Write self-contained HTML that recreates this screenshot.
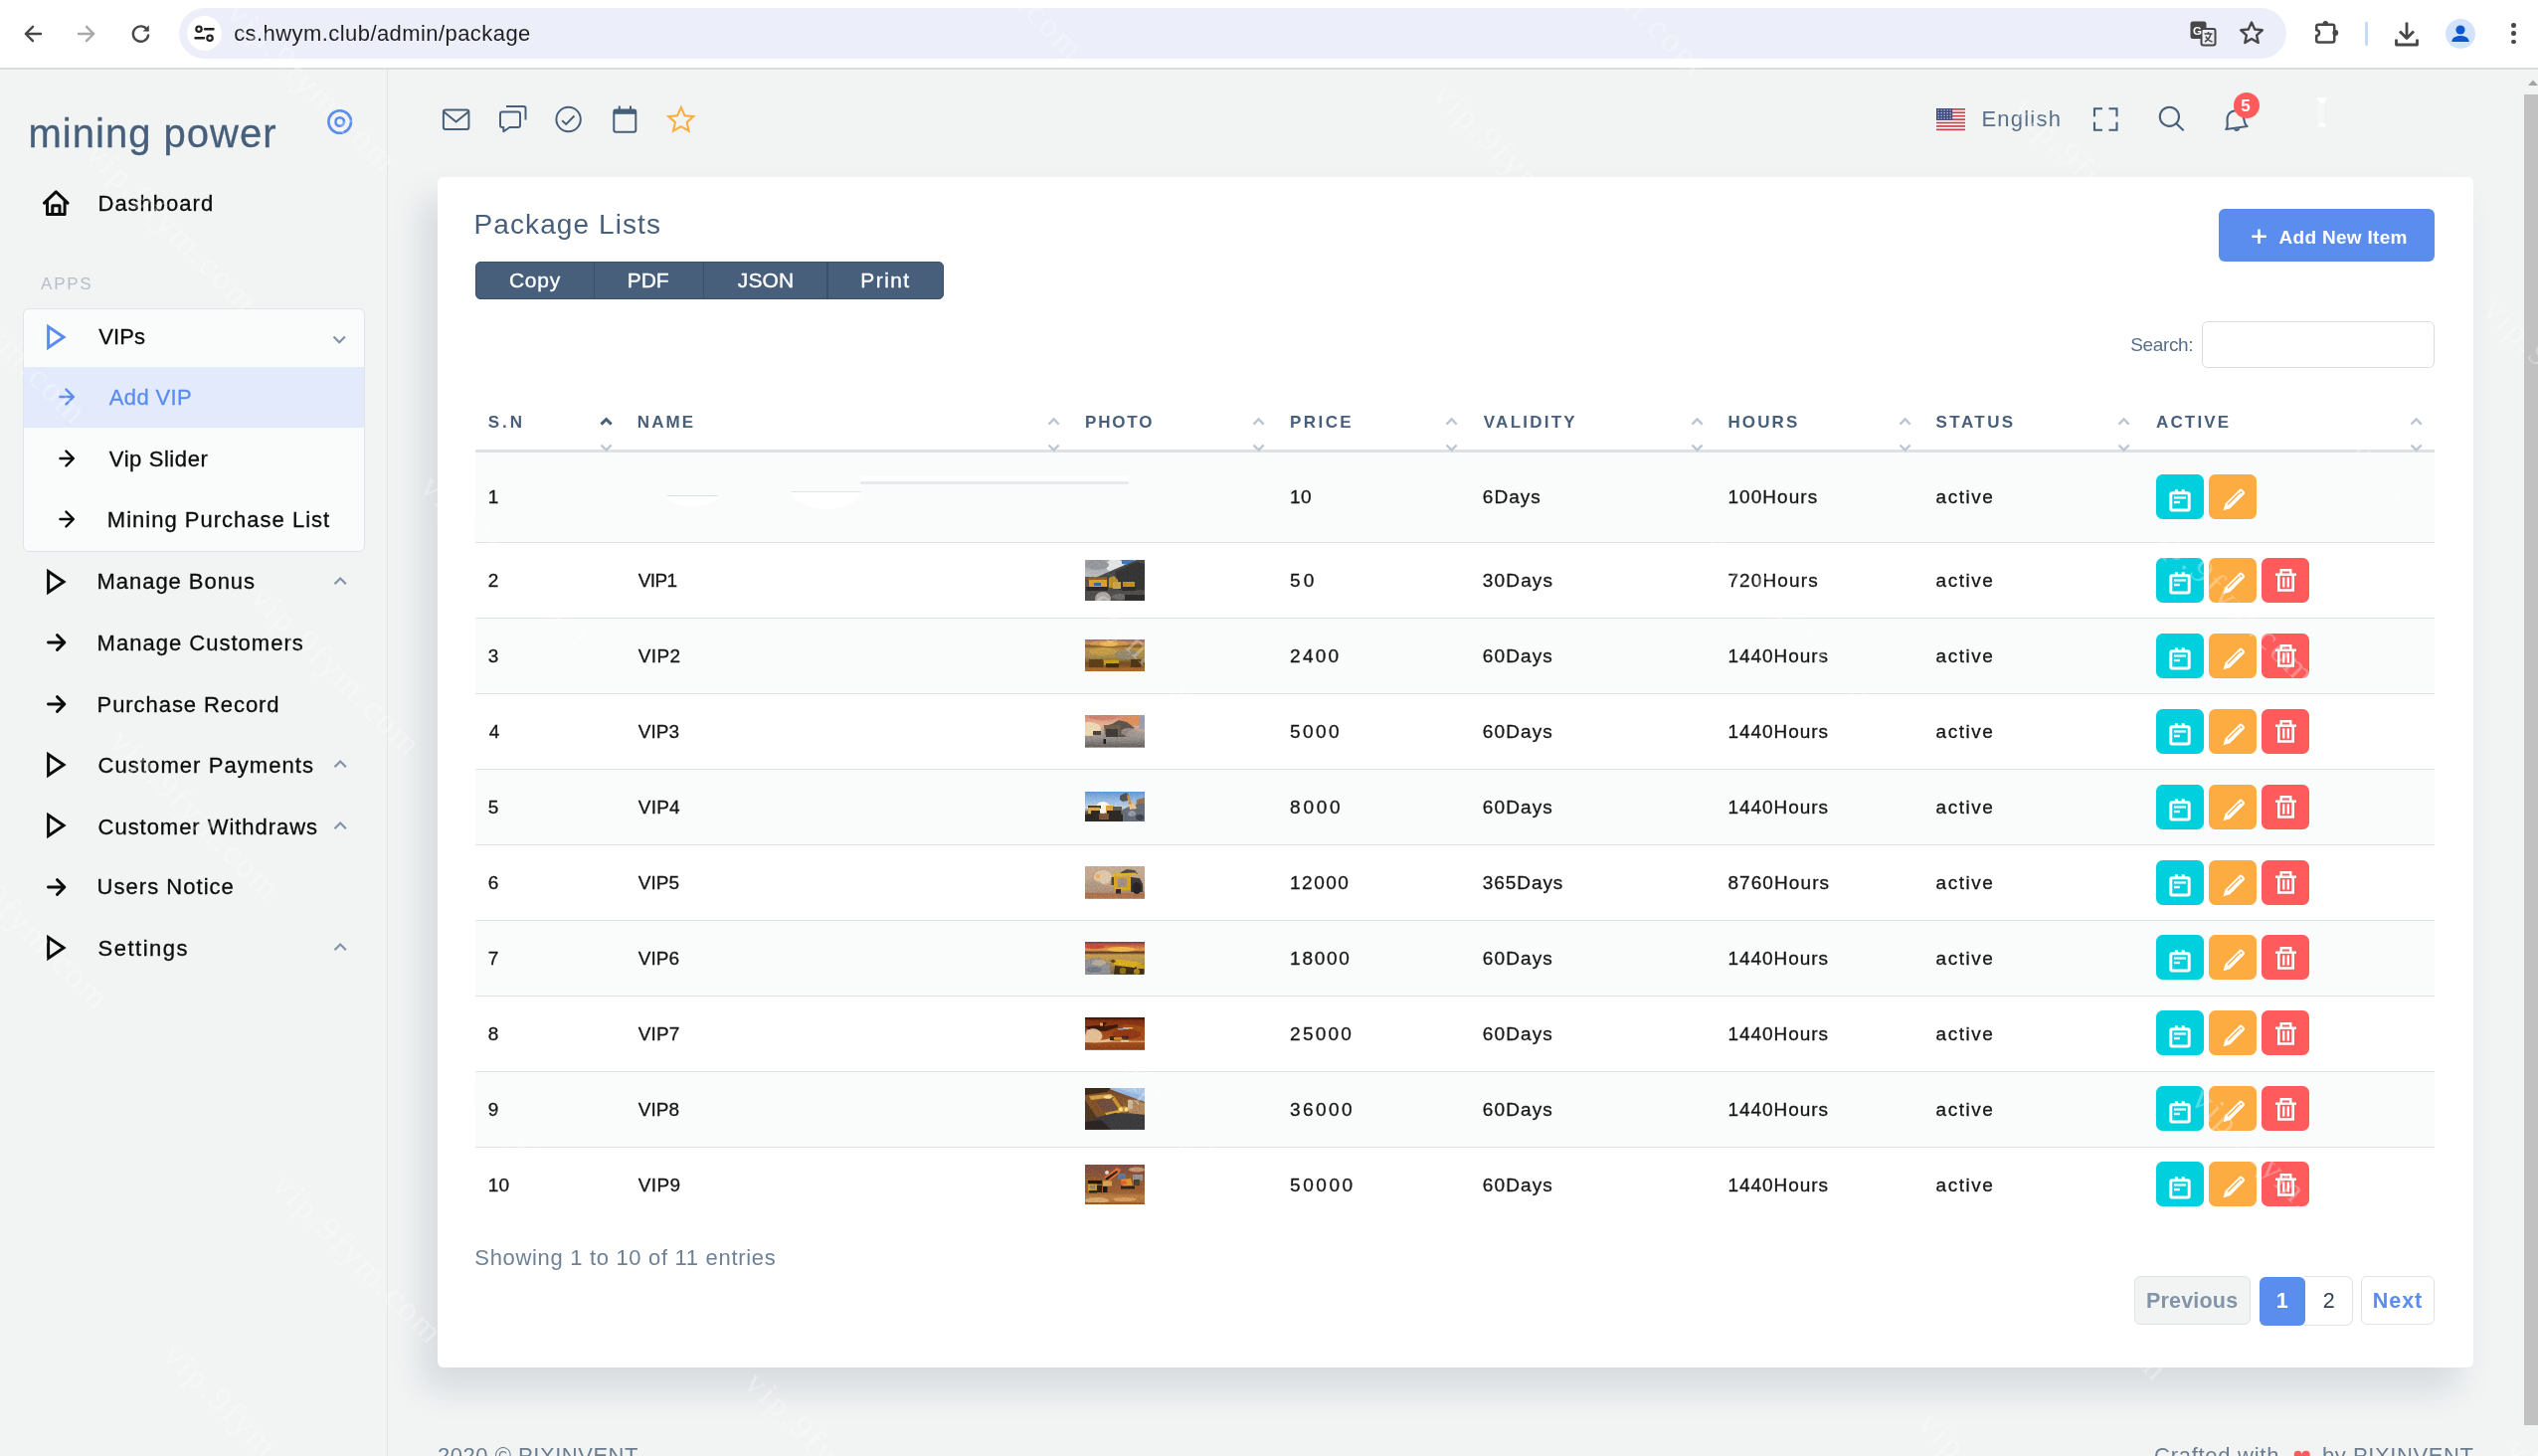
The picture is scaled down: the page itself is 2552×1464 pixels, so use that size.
<!DOCTYPE html>
<html lang="en"><head><meta charset="utf-8"><title>Package Lists</title>
<style>
html,body{margin:0;padding:0}
body{width:2552px;height:1464px;overflow:hidden;position:relative;background:#f2f4f4;font-family:"Liberation Sans",sans-serif}
.g{position:absolute;left:0;top:0;width:0;height:0;display:block}
.a{position:absolute}
.t{position:absolute;white-space:nowrap;line-height:1}
.c{font-size:19px;letter-spacing:0.9px;color:#161616;-webkit-text-stroke:.3px #161616}
.sb{-webkit-text-stroke:.3px currentColor}
.wb{-webkit-text-stroke:.35px #fff}
.wm{position:absolute;width:300px;text-align:center;white-space:nowrap;font-family:"Liberation Serif",serif;font-size:35px;line-height:44px;letter-spacing:2.600px;color:#fff;opacity:.3;transform:rotate(45deg);pointer-events:none}
svg{overflow:visible}
</style></head><body>
<header class="g browser-chrome">
<div class="a" style="left:0;top:0;width:2552px;height:67.5px;background:#fff"></div>
<div class="a" style="left:0;top:67.5px;width:2552px;height:2px;background:#dcdedd"></div>
<div class="a" style="left:180px;top:8px;width:2119px;height:50.6px;border-radius:26px;background:#eceff9"></div>
<div class="a" style="left:188.3px;top:16px;width:35.2px;height:35.2px;border-radius:50%;background:#fff"></div>
<svg style="position:absolute;left:13px;top:13.5px" width="40" height="40" viewBox="0 0 40 40" ><path d="M28 20H13.200M20 12.800L12.800 20l7.200 7.200" fill="none" stroke="#474747" stroke-width="2.400" stroke-linecap="round" stroke-linejoin="round"/></svg>
<svg style="position:absolute;left:67px;top:13.5px" width="40" height="40" viewBox="0 0 40 40" ><path d="M12 20h14.800M20 12.800L27.200 20l-7.200 7.200" fill="none" stroke="#a9a9a9" stroke-width="2.400" stroke-linecap="round" stroke-linejoin="round"/></svg>
<svg style="position:absolute;left:121px;top:13.5px" width="40" height="40" viewBox="0 0 40 40" ><path d="M27.200 16.200A7.700 7.700 0 1 0 28.100 21.500" fill="none" stroke="#474747" stroke-width="2.400" stroke-linecap="round"/><path d="M28.800 11.300v6.200h-6.200z" fill="#474747"/></svg>
<svg style="position:absolute;left:188px;top:16px" width="36" height="36" viewBox="0 0 36 36" ><circle cx="12" cy="13.200" r="2.700" fill="none" stroke="#1f1f1f" stroke-width="2.200"/><path d="M18 13.200h8.500M8.500 22.200H17" stroke="#1f1f1f" stroke-width="2.400" stroke-linecap="round"/><circle cx="23" cy="22.200" r="2.700" fill="none" stroke="#1f1f1f" stroke-width="2.200"/></svg>
<svg style="position:absolute;left:2201px;top:20px" width="30" height="30" viewBox="0 0 30 30" ><rect x="1.500" y="1.500" width="16" height="17.500" rx="2.500" fill="#474747"/><rect x="12.500" y="9" width="14" height="16.500" rx="2" fill="#eceff9" stroke="#474747" stroke-width="2"/><text x="4" y="15" font-family="Liberation Sans,sans-serif" font-weight="700" font-size="11.500" fill="#fff">G</text><path d="M15.500 14h8M19.500 12v2M22 14c-1 4-3.500 6.500-6 8M17 16.500c1 2.500 3.500 4.500 6.500 5.500" stroke="#474747" stroke-width="1.500" fill="none"/></svg>
<svg style="position:absolute;left:2250px;top:19px" width="28" height="28" viewBox="0 0 28 28" ><path d="M14 3.500l3.200 7 7.600.8-5.700 5.100 1.600 7.500L14 20l-6.700 3.900 1.600-7.500-5.700-5.100 7.600-.8z" fill="none" stroke="#474747" stroke-width="2.400" stroke-linejoin="round"/></svg>
<svg style="position:absolute;left:2324px;top:17px" width="32" height="32" viewBox="0 0 32 32" ><path d="M7.250 7.750H21.250a2 2 0 0 1 2 2V23.450a2 2 0 0 1-2 2H7.250a2 2 0 0 1-2-2V18.900a2.800 2.800 0 0 0 0-5.600V9.750a2 2 0 0 1 2-2z" fill="none" stroke="#474747" stroke-width="2.500" stroke-linejoin="round"/><circle cx="14.300" cy="6.600" r="2.700" fill="#474747"/><circle cx="24.300" cy="16" r="2.900" fill="#474747"/></svg>
<div class="a" style="left:2378.300px;top:22px;width:2.500px;height:23.500px;background:#c6daf6;border-radius:1px"></div>
<svg style="position:absolute;left:2405px;top:18px" width="30" height="32" viewBox="0 0 30 32" ><path d="M15 4.500v15M8 13.500l7 7 7-7M4.500 21.500v5.500h21v-5.500" fill="none" stroke="#474747" stroke-width="2.800" stroke-linejoin="round" stroke-linecap="butt"/></svg>
<div class="a" style="left:2459.200px;top:18.700px;width:30px;height:30px;border-radius:50%;background:#d3e3fd"></div>
<svg style="position:absolute;left:2459.2px;top:18.7px" width="30" height="30" viewBox="0 0 30 30" ><circle cx="15" cy="11" r="4.600" fill="#0b57d0"/><path d="M6.300 23c0-4.500 5-6 8.700-6s8.700 1.500 8.700 6z" fill="#0b57d0"/></svg>
<div class="a" style="left:2525.300px;top:23.0px;width:4.600px;height:4.600px;border-radius:50%;background:#474747"></div>
<div class="a" style="left:2525.300px;top:31.400000000000002px;width:4.600px;height:4.600px;border-radius:50%;background:#474747"></div>
<div class="a" style="left:2525.300px;top:39.800000000000004px;width:4.600px;height:4.600px;border-radius:50%;background:#474747"></div>
<div class="a" style="left:2538px;top:95px;width:14px;height:1338px;background:#c1c1c1"></div>
<svg style="position:absolute;left:2542px;top:79px" width="10" height="8" viewBox="0 0 10 8" ><path d="M0 7L5 1.500 10 7z" fill="#a3a3a3"/></svg>
<span class="t " style="left:235.2px;top:23px;font-size:22px;font-weight:400;color:#1f1f1f;letter-spacing:0.43px">cs.hwym.club/admin/package</span>
</header>
<main class="g content">
<div class="a" style="left:440px;top:178px;width:2047px;height:1197px;border-radius:6px;background:#fff;box-shadow:-15px 22px 34px 0 rgba(25,42,70,.125)"></div>
<div class="a" style="left:478px;top:263px;width:471.200px;height:37.800px;box-sizing:border-box;border:1.200px solid #3b4f68;border-radius:5px;background:#475f7b"></div>
<div class="a" style="left:596.55px;top:263px;width:1.500px;height:37.700px;background:#3b4f68"></div>
<div class="a" style="left:706.65px;top:263px;width:1.500px;height:37.700px;background:#3b4f68"></div>
<div class="a" style="left:831.25px;top:263px;width:1.500px;height:37.700px;background:#3b4f68"></div>
<div class="a" style="left:2231.300px;top:210px;width:216.700px;height:53px;border-radius:6px;background:#5A8DEE"></div>
<svg style="position:absolute;left:2262px;top:228px" width="20" height="20" viewBox="0 0 20 20" ><path d="M9.500 2.500v14.500M2.300 9.750h14.500" stroke="#fff" stroke-width="2.600"/></svg>
<div class="a" style="left:2214.300px;top:323px;width:233.700px;height:46.500px;box-sizing:border-box;border:1.500px solid #d8dde5;border-radius:5.500px;background:#fff"></div>
<div class="a" style="left:478px;top:452px;width:1970px;height:3px;background:#dde1e6"></div>
<div class="a" style="left:478px;top:455px;width:1970px;height:90.40px;background:#fafbfb"></div>
<div class="a" style="left:478px;top:621.36px;width:1970px;height:75.96px;background:#fafbfb"></div>
<div class="a" style="left:478px;top:773.28px;width:1970px;height:75.96px;background:#fafbfb"></div>
<div class="a" style="left:478px;top:925.1999999999999px;width:1970px;height:75.96px;background:#fafbfb"></div>
<div class="a" style="left:478px;top:1077.12px;width:1970px;height:75.96px;background:#fafbfb"></div>
<div class="a" style="left:478px;top:545.00px;width:1970px;height:1.300px;background:#dfe3e7"></div>
<div class="a" style="left:478px;top:620.96px;width:1970px;height:1.300px;background:#dfe3e7"></div>
<div class="a" style="left:478px;top:696.92px;width:1970px;height:1.300px;background:#dfe3e7"></div>
<div class="a" style="left:478px;top:772.88px;width:1970px;height:1.300px;background:#dfe3e7"></div>
<div class="a" style="left:478px;top:848.84px;width:1970px;height:1.300px;background:#dfe3e7"></div>
<div class="a" style="left:478px;top:924.80px;width:1970px;height:1.300px;background:#dfe3e7"></div>
<div class="a" style="left:478px;top:1000.76px;width:1970px;height:1.300px;background:#dfe3e7"></div>
<div class="a" style="left:478px;top:1076.72px;width:1970px;height:1.300px;background:#dfe3e7"></div>
<div class="a" style="left:478px;top:1152.68px;width:1970px;height:1.300px;background:#dfe3e7"></div>
<svg style="position:absolute;left:603.0px;top:419.25px" width="13.2" height="10.1" viewBox="0 0 13.2 10.1" ><path d="M1.500 7.6L6.6 2.500 11.7 7.6" fill="none" stroke="#475f7b" stroke-width="3"/></svg>
<svg style="position:absolute;left:603.0px;top:444.95px" width="13.2" height="10.1" viewBox="0 0 13.2 10.1" ><path d="M1.500 2.500L6.6 7.6 11.7 2.500" fill="none" stroke="#bcc5d0" stroke-width="2.4"/></svg>
<svg style="position:absolute;left:1053.0px;top:419.25px" width="13.2" height="10.1" viewBox="0 0 13.2 10.1" ><path d="M1.500 7.6L6.6 2.500 11.7 7.6" fill="none" stroke="#bcc5d0" stroke-width="2.4"/></svg>
<svg style="position:absolute;left:1053.0px;top:444.95px" width="13.2" height="10.1" viewBox="0 0 13.2 10.1" ><path d="M1.500 2.500L6.6 7.6 11.7 2.500" fill="none" stroke="#bcc5d0" stroke-width="2.4"/></svg>
<svg style="position:absolute;left:1259.0px;top:419.25px" width="13.2" height="10.1" viewBox="0 0 13.2 10.1" ><path d="M1.500 7.6L6.6 2.500 11.7 7.6" fill="none" stroke="#bcc5d0" stroke-width="2.4"/></svg>
<svg style="position:absolute;left:1259.0px;top:444.95px" width="13.2" height="10.1" viewBox="0 0 13.2 10.1" ><path d="M1.500 2.500L6.6 7.6 11.7 2.500" fill="none" stroke="#bcc5d0" stroke-width="2.4"/></svg>
<svg style="position:absolute;left:1453.0px;top:419.25px" width="13.2" height="10.1" viewBox="0 0 13.2 10.1" ><path d="M1.500 7.6L6.6 2.500 11.7 7.6" fill="none" stroke="#bcc5d0" stroke-width="2.4"/></svg>
<svg style="position:absolute;left:1453.0px;top:444.95px" width="13.2" height="10.1" viewBox="0 0 13.2 10.1" ><path d="M1.500 2.500L6.6 7.6 11.7 2.500" fill="none" stroke="#bcc5d0" stroke-width="2.4"/></svg>
<svg style="position:absolute;left:1699.5px;top:419.25px" width="13.2" height="10.1" viewBox="0 0 13.2 10.1" ><path d="M1.500 7.6L6.6 2.500 11.7 7.6" fill="none" stroke="#bcc5d0" stroke-width="2.4"/></svg>
<svg style="position:absolute;left:1699.5px;top:444.95px" width="13.2" height="10.1" viewBox="0 0 13.2 10.1" ><path d="M1.500 2.500L6.6 7.6 11.7 2.500" fill="none" stroke="#bcc5d0" stroke-width="2.4"/></svg>
<svg style="position:absolute;left:1909.0px;top:419.25px" width="13.2" height="10.1" viewBox="0 0 13.2 10.1" ><path d="M1.500 7.6L6.6 2.500 11.7 7.6" fill="none" stroke="#bcc5d0" stroke-width="2.4"/></svg>
<svg style="position:absolute;left:1909.0px;top:444.95px" width="13.2" height="10.1" viewBox="0 0 13.2 10.1" ><path d="M1.500 2.500L6.6 7.6 11.7 2.500" fill="none" stroke="#bcc5d0" stroke-width="2.4"/></svg>
<svg style="position:absolute;left:2129.0px;top:419.25px" width="13.2" height="10.1" viewBox="0 0 13.2 10.1" ><path d="M1.500 7.6L6.6 2.500 11.7 7.6" fill="none" stroke="#bcc5d0" stroke-width="2.4"/></svg>
<svg style="position:absolute;left:2129.0px;top:444.95px" width="13.2" height="10.1" viewBox="0 0 13.2 10.1" ><path d="M1.500 2.500L6.6 7.6 11.7 2.500" fill="none" stroke="#bcc5d0" stroke-width="2.4"/></svg>
<svg style="position:absolute;left:2423.0px;top:419.25px" width="13.2" height="10.1" viewBox="0 0 13.2 10.1" ><path d="M1.500 7.6L6.6 2.500 11.7 7.6" fill="none" stroke="#bcc5d0" stroke-width="2.4"/></svg>
<svg style="position:absolute;left:2423.0px;top:444.95px" width="13.2" height="10.1" viewBox="0 0 13.2 10.1" ><path d="M1.500 2.500L6.6 7.6 11.7 2.500" fill="none" stroke="#bcc5d0" stroke-width="2.4"/></svg>
<div class="a" style="left:865px;top:478.500px;width:270px;height:6px;background:#fff;border-radius:3px;opacity:.9"></div>
<div class="a" style="left:865.400px;top:484.300px;width:270px;height:3.200px;background:#e6e9ed;border-radius:2px"></div>
<div class="a" style="left:671px;top:498.400px;width:51px;height:12px;background:#fff;border-radius:0 0 50% 50%/0 0 100% 100%;opacity:.95"></div>
<div class="a" style="left:671px;top:497.600px;width:51px;height:1.300px;background:#dde1e7"></div>
<div class="a" style="left:796px;top:494.400px;width:70px;height:18px;background:#fff;border-radius:0 0 50% 50%/0 0 100% 100%;opacity:.95"></div>
<div class="a" style="left:796px;top:493.600px;width:70px;height:1.300px;background:#e0e4e9"></div>
<div class="a" style="left:2168px;top:477.20px;width:48px;height:45px;border-radius:6.500px;background:#00CFDD"></div>
<svg style="position:absolute;left:2180px;top:489.7px" width="24" height="26" viewBox="0 0 24 26" ><rect x="2.800" y="5.700" width="18.400" height="17.400" rx="1.500" fill="none" stroke="#fff" stroke-width="3"/><path d="M8.400 2.200v4M15.200 2.200v4" stroke="#fff" stroke-width="3"/><path d="M6 10.500h12" stroke="#fff" stroke-width="2.200"/><path d="M6 15h6" stroke="#fff" stroke-width="2.400"/></svg>
<div class="a" style="left:2221px;top:477.20px;width:48px;height:45px;border-radius:6.500px;background:#FDAC41"></div>
<svg style="position:absolute;left:2231.5px;top:488.2px" width="29" height="29" viewBox="0 0 26 26" ><path d="M3.200 22.600l1.700-6L17.700 3.800a1.800 1.800 0 0 1 2.500 0l1.800 1.800a1.800 1.800 0 0 1 0 2.500L9.200 20.900z" fill="#fff"/><path d="M7.300 17.300L17.600 7" stroke="#FDAC41" stroke-width="1.200"/><rect x="18.300" y="5.500" width="1.800" height="1.800" fill="#FDAC41" transform="rotate(45 19.200 6.400)"/></svg>
<div class="a" style="left:2168px;top:560.68px;width:48px;height:45px;border-radius:6.500px;background:#00CFDD"></div>
<svg style="position:absolute;left:2180px;top:573.18px" width="24" height="26" viewBox="0 0 24 26" ><rect x="2.800" y="5.700" width="18.400" height="17.400" rx="1.500" fill="none" stroke="#fff" stroke-width="3"/><path d="M8.400 2.200v4M15.200 2.200v4" stroke="#fff" stroke-width="3"/><path d="M6 10.500h12" stroke="#fff" stroke-width="2.200"/><path d="M6 15h6" stroke="#fff" stroke-width="2.400"/></svg>
<div class="a" style="left:2221px;top:560.68px;width:48px;height:45px;border-radius:6.500px;background:#FDAC41"></div>
<svg style="position:absolute;left:2231.5px;top:571.68px" width="29" height="29" viewBox="0 0 26 26" ><path d="M3.200 22.600l1.700-6L17.700 3.800a1.800 1.800 0 0 1 2.500 0l1.800 1.800a1.800 1.800 0 0 1 0 2.500L9.200 20.900z" fill="#fff"/><path d="M7.300 17.300L17.600 7" stroke="#FDAC41" stroke-width="1.200"/><rect x="18.300" y="5.500" width="1.800" height="1.800" fill="#FDAC41" transform="rotate(45 19.200 6.400)"/></svg>
<div class="a" style="left:2274px;top:560.68px;width:48px;height:45px;border-radius:6.500px;background:#FF5B5C"></div>
<svg style="position:absolute;left:2286px;top:570.18px" width="26" height="28" viewBox="0 0 26 28" ><path d="M2 7.700h21" stroke="#fff" stroke-width="2.400"/><path d="M7.700 7V3.200h9.600V7" fill="none" stroke="#fff" stroke-width="2.400"/><path d="M5.300 8v15.500h14.400V8" fill="none" stroke="#fff" stroke-width="2.600"/><path d="M10.200 10.500v10M14.800 10.500v10" stroke="#fff" stroke-width="2.400"/></svg>
<div class="a" style="left:2168px;top:636.64px;width:48px;height:45px;border-radius:6.500px;background:#00CFDD"></div>
<svg style="position:absolute;left:2180px;top:649.1399999999999px" width="24" height="26" viewBox="0 0 24 26" ><rect x="2.800" y="5.700" width="18.400" height="17.400" rx="1.500" fill="none" stroke="#fff" stroke-width="3"/><path d="M8.400 2.200v4M15.200 2.200v4" stroke="#fff" stroke-width="3"/><path d="M6 10.500h12" stroke="#fff" stroke-width="2.200"/><path d="M6 15h6" stroke="#fff" stroke-width="2.400"/></svg>
<div class="a" style="left:2221px;top:636.64px;width:48px;height:45px;border-radius:6.500px;background:#FDAC41"></div>
<svg style="position:absolute;left:2231.5px;top:647.6399999999999px" width="29" height="29" viewBox="0 0 26 26" ><path d="M3.200 22.600l1.700-6L17.700 3.800a1.800 1.800 0 0 1 2.500 0l1.800 1.800a1.800 1.800 0 0 1 0 2.500L9.200 20.900z" fill="#fff"/><path d="M7.300 17.300L17.600 7" stroke="#FDAC41" stroke-width="1.200"/><rect x="18.300" y="5.500" width="1.800" height="1.800" fill="#FDAC41" transform="rotate(45 19.200 6.400)"/></svg>
<div class="a" style="left:2274px;top:636.64px;width:48px;height:45px;border-radius:6.500px;background:#FF5B5C"></div>
<svg style="position:absolute;left:2286px;top:646.1399999999999px" width="26" height="28" viewBox="0 0 26 28" ><path d="M2 7.700h21" stroke="#fff" stroke-width="2.400"/><path d="M7.700 7V3.200h9.600V7" fill="none" stroke="#fff" stroke-width="2.400"/><path d="M5.300 8v15.500h14.400V8" fill="none" stroke="#fff" stroke-width="2.600"/><path d="M10.200 10.500v10M14.800 10.500v10" stroke="#fff" stroke-width="2.400"/></svg>
<div class="a" style="left:2168px;top:712.60px;width:48px;height:45px;border-radius:6.500px;background:#00CFDD"></div>
<svg style="position:absolute;left:2180px;top:725.0999999999999px" width="24" height="26" viewBox="0 0 24 26" ><rect x="2.800" y="5.700" width="18.400" height="17.400" rx="1.500" fill="none" stroke="#fff" stroke-width="3"/><path d="M8.400 2.200v4M15.200 2.200v4" stroke="#fff" stroke-width="3"/><path d="M6 10.500h12" stroke="#fff" stroke-width="2.200"/><path d="M6 15h6" stroke="#fff" stroke-width="2.400"/></svg>
<div class="a" style="left:2221px;top:712.60px;width:48px;height:45px;border-radius:6.500px;background:#FDAC41"></div>
<svg style="position:absolute;left:2231.5px;top:723.5999999999999px" width="29" height="29" viewBox="0 0 26 26" ><path d="M3.200 22.600l1.700-6L17.700 3.800a1.800 1.800 0 0 1 2.500 0l1.800 1.800a1.800 1.800 0 0 1 0 2.500L9.200 20.900z" fill="#fff"/><path d="M7.300 17.300L17.600 7" stroke="#FDAC41" stroke-width="1.200"/><rect x="18.300" y="5.500" width="1.800" height="1.800" fill="#FDAC41" transform="rotate(45 19.200 6.400)"/></svg>
<div class="a" style="left:2274px;top:712.60px;width:48px;height:45px;border-radius:6.500px;background:#FF5B5C"></div>
<svg style="position:absolute;left:2286px;top:722.0999999999999px" width="26" height="28" viewBox="0 0 26 28" ><path d="M2 7.700h21" stroke="#fff" stroke-width="2.400"/><path d="M7.700 7V3.200h9.600V7" fill="none" stroke="#fff" stroke-width="2.400"/><path d="M5.300 8v15.500h14.400V8" fill="none" stroke="#fff" stroke-width="2.600"/><path d="M10.200 10.500v10M14.800 10.500v10" stroke="#fff" stroke-width="2.400"/></svg>
<div class="a" style="left:2168px;top:788.56px;width:48px;height:45px;border-radius:6.500px;background:#00CFDD"></div>
<svg style="position:absolute;left:2180px;top:801.06px" width="24" height="26" viewBox="0 0 24 26" ><rect x="2.800" y="5.700" width="18.400" height="17.400" rx="1.500" fill="none" stroke="#fff" stroke-width="3"/><path d="M8.400 2.200v4M15.200 2.200v4" stroke="#fff" stroke-width="3"/><path d="M6 10.500h12" stroke="#fff" stroke-width="2.200"/><path d="M6 15h6" stroke="#fff" stroke-width="2.400"/></svg>
<div class="a" style="left:2221px;top:788.56px;width:48px;height:45px;border-radius:6.500px;background:#FDAC41"></div>
<svg style="position:absolute;left:2231.5px;top:799.56px" width="29" height="29" viewBox="0 0 26 26" ><path d="M3.200 22.600l1.700-6L17.700 3.800a1.800 1.800 0 0 1 2.500 0l1.800 1.800a1.800 1.800 0 0 1 0 2.500L9.200 20.900z" fill="#fff"/><path d="M7.300 17.300L17.600 7" stroke="#FDAC41" stroke-width="1.200"/><rect x="18.300" y="5.500" width="1.800" height="1.800" fill="#FDAC41" transform="rotate(45 19.200 6.400)"/></svg>
<div class="a" style="left:2274px;top:788.56px;width:48px;height:45px;border-radius:6.500px;background:#FF5B5C"></div>
<svg style="position:absolute;left:2286px;top:798.06px" width="26" height="28" viewBox="0 0 26 28" ><path d="M2 7.700h21" stroke="#fff" stroke-width="2.400"/><path d="M7.700 7V3.200h9.600V7" fill="none" stroke="#fff" stroke-width="2.400"/><path d="M5.300 8v15.500h14.400V8" fill="none" stroke="#fff" stroke-width="2.600"/><path d="M10.200 10.500v10M14.800 10.500v10" stroke="#fff" stroke-width="2.400"/></svg>
<div class="a" style="left:2168px;top:864.52px;width:48px;height:45px;border-radius:6.500px;background:#00CFDD"></div>
<svg style="position:absolute;left:2180px;top:877.02px" width="24" height="26" viewBox="0 0 24 26" ><rect x="2.800" y="5.700" width="18.400" height="17.400" rx="1.500" fill="none" stroke="#fff" stroke-width="3"/><path d="M8.400 2.200v4M15.200 2.200v4" stroke="#fff" stroke-width="3"/><path d="M6 10.500h12" stroke="#fff" stroke-width="2.200"/><path d="M6 15h6" stroke="#fff" stroke-width="2.400"/></svg>
<div class="a" style="left:2221px;top:864.52px;width:48px;height:45px;border-radius:6.500px;background:#FDAC41"></div>
<svg style="position:absolute;left:2231.5px;top:875.52px" width="29" height="29" viewBox="0 0 26 26" ><path d="M3.200 22.600l1.700-6L17.700 3.800a1.800 1.800 0 0 1 2.500 0l1.800 1.800a1.800 1.800 0 0 1 0 2.500L9.200 20.900z" fill="#fff"/><path d="M7.300 17.300L17.600 7" stroke="#FDAC41" stroke-width="1.200"/><rect x="18.300" y="5.500" width="1.800" height="1.800" fill="#FDAC41" transform="rotate(45 19.200 6.400)"/></svg>
<div class="a" style="left:2274px;top:864.52px;width:48px;height:45px;border-radius:6.500px;background:#FF5B5C"></div>
<svg style="position:absolute;left:2286px;top:874.02px" width="26" height="28" viewBox="0 0 26 28" ><path d="M2 7.700h21" stroke="#fff" stroke-width="2.400"/><path d="M7.700 7V3.200h9.600V7" fill="none" stroke="#fff" stroke-width="2.400"/><path d="M5.300 8v15.500h14.400V8" fill="none" stroke="#fff" stroke-width="2.600"/><path d="M10.200 10.500v10M14.800 10.500v10" stroke="#fff" stroke-width="2.400"/></svg>
<div class="a" style="left:2168px;top:940.48px;width:48px;height:45px;border-radius:6.500px;background:#00CFDD"></div>
<svg style="position:absolute;left:2180px;top:952.9799999999999px" width="24" height="26" viewBox="0 0 24 26" ><rect x="2.800" y="5.700" width="18.400" height="17.400" rx="1.500" fill="none" stroke="#fff" stroke-width="3"/><path d="M8.400 2.200v4M15.200 2.200v4" stroke="#fff" stroke-width="3"/><path d="M6 10.500h12" stroke="#fff" stroke-width="2.200"/><path d="M6 15h6" stroke="#fff" stroke-width="2.400"/></svg>
<div class="a" style="left:2221px;top:940.48px;width:48px;height:45px;border-radius:6.500px;background:#FDAC41"></div>
<svg style="position:absolute;left:2231.5px;top:951.4799999999999px" width="29" height="29" viewBox="0 0 26 26" ><path d="M3.200 22.600l1.700-6L17.700 3.800a1.800 1.800 0 0 1 2.500 0l1.800 1.800a1.800 1.800 0 0 1 0 2.500L9.200 20.900z" fill="#fff"/><path d="M7.300 17.300L17.600 7" stroke="#FDAC41" stroke-width="1.200"/><rect x="18.300" y="5.500" width="1.800" height="1.800" fill="#FDAC41" transform="rotate(45 19.200 6.400)"/></svg>
<div class="a" style="left:2274px;top:940.48px;width:48px;height:45px;border-radius:6.500px;background:#FF5B5C"></div>
<svg style="position:absolute;left:2286px;top:949.9799999999999px" width="26" height="28" viewBox="0 0 26 28" ><path d="M2 7.700h21" stroke="#fff" stroke-width="2.400"/><path d="M7.700 7V3.200h9.600V7" fill="none" stroke="#fff" stroke-width="2.400"/><path d="M5.300 8v15.500h14.400V8" fill="none" stroke="#fff" stroke-width="2.600"/><path d="M10.200 10.500v10M14.800 10.500v10" stroke="#fff" stroke-width="2.400"/></svg>
<div class="a" style="left:2168px;top:1016.44px;width:48px;height:45px;border-radius:6.500px;background:#00CFDD"></div>
<svg style="position:absolute;left:2180px;top:1028.9399999999998px" width="24" height="26" viewBox="0 0 24 26" ><rect x="2.800" y="5.700" width="18.400" height="17.400" rx="1.500" fill="none" stroke="#fff" stroke-width="3"/><path d="M8.400 2.200v4M15.200 2.200v4" stroke="#fff" stroke-width="3"/><path d="M6 10.500h12" stroke="#fff" stroke-width="2.200"/><path d="M6 15h6" stroke="#fff" stroke-width="2.400"/></svg>
<div class="a" style="left:2221px;top:1016.44px;width:48px;height:45px;border-radius:6.500px;background:#FDAC41"></div>
<svg style="position:absolute;left:2231.5px;top:1027.4399999999998px" width="29" height="29" viewBox="0 0 26 26" ><path d="M3.200 22.600l1.700-6L17.700 3.800a1.800 1.800 0 0 1 2.500 0l1.800 1.800a1.800 1.800 0 0 1 0 2.500L9.200 20.900z" fill="#fff"/><path d="M7.300 17.300L17.600 7" stroke="#FDAC41" stroke-width="1.200"/><rect x="18.300" y="5.500" width="1.800" height="1.800" fill="#FDAC41" transform="rotate(45 19.200 6.400)"/></svg>
<div class="a" style="left:2274px;top:1016.44px;width:48px;height:45px;border-radius:6.500px;background:#FF5B5C"></div>
<svg style="position:absolute;left:2286px;top:1025.9399999999998px" width="26" height="28" viewBox="0 0 26 28" ><path d="M2 7.700h21" stroke="#fff" stroke-width="2.400"/><path d="M7.700 7V3.200h9.600V7" fill="none" stroke="#fff" stroke-width="2.400"/><path d="M5.300 8v15.500h14.400V8" fill="none" stroke="#fff" stroke-width="2.600"/><path d="M10.200 10.500v10M14.800 10.500v10" stroke="#fff" stroke-width="2.400"/></svg>
<div class="a" style="left:2168px;top:1092.40px;width:48px;height:45px;border-radius:6.500px;background:#00CFDD"></div>
<svg style="position:absolute;left:2180px;top:1104.8999999999999px" width="24" height="26" viewBox="0 0 24 26" ><rect x="2.800" y="5.700" width="18.400" height="17.400" rx="1.500" fill="none" stroke="#fff" stroke-width="3"/><path d="M8.400 2.200v4M15.200 2.200v4" stroke="#fff" stroke-width="3"/><path d="M6 10.500h12" stroke="#fff" stroke-width="2.200"/><path d="M6 15h6" stroke="#fff" stroke-width="2.400"/></svg>
<div class="a" style="left:2221px;top:1092.40px;width:48px;height:45px;border-radius:6.500px;background:#FDAC41"></div>
<svg style="position:absolute;left:2231.5px;top:1103.3999999999999px" width="29" height="29" viewBox="0 0 26 26" ><path d="M3.200 22.600l1.700-6L17.700 3.800a1.800 1.800 0 0 1 2.500 0l1.800 1.800a1.800 1.800 0 0 1 0 2.500L9.200 20.900z" fill="#fff"/><path d="M7.300 17.300L17.600 7" stroke="#FDAC41" stroke-width="1.200"/><rect x="18.300" y="5.500" width="1.800" height="1.800" fill="#FDAC41" transform="rotate(45 19.200 6.400)"/></svg>
<div class="a" style="left:2274px;top:1092.40px;width:48px;height:45px;border-radius:6.500px;background:#FF5B5C"></div>
<svg style="position:absolute;left:2286px;top:1101.8999999999999px" width="26" height="28" viewBox="0 0 26 28" ><path d="M2 7.700h21" stroke="#fff" stroke-width="2.400"/><path d="M7.700 7V3.200h9.600V7" fill="none" stroke="#fff" stroke-width="2.400"/><path d="M5.300 8v15.500h14.400V8" fill="none" stroke="#fff" stroke-width="2.600"/><path d="M10.200 10.500v10M14.800 10.500v10" stroke="#fff" stroke-width="2.400"/></svg>
<div class="a" style="left:2168px;top:1168.36px;width:48px;height:45px;border-radius:6.500px;background:#00CFDD"></div>
<svg style="position:absolute;left:2180px;top:1180.86px" width="24" height="26" viewBox="0 0 24 26" ><rect x="2.800" y="5.700" width="18.400" height="17.400" rx="1.500" fill="none" stroke="#fff" stroke-width="3"/><path d="M8.400 2.200v4M15.200 2.200v4" stroke="#fff" stroke-width="3"/><path d="M6 10.500h12" stroke="#fff" stroke-width="2.200"/><path d="M6 15h6" stroke="#fff" stroke-width="2.400"/></svg>
<div class="a" style="left:2221px;top:1168.36px;width:48px;height:45px;border-radius:6.500px;background:#FDAC41"></div>
<svg style="position:absolute;left:2231.5px;top:1179.36px" width="29" height="29" viewBox="0 0 26 26" ><path d="M3.200 22.600l1.700-6L17.700 3.800a1.800 1.800 0 0 1 2.500 0l1.800 1.800a1.800 1.800 0 0 1 0 2.500L9.200 20.900z" fill="#fff"/><path d="M7.300 17.300L17.600 7" stroke="#FDAC41" stroke-width="1.200"/><rect x="18.300" y="5.500" width="1.800" height="1.800" fill="#FDAC41" transform="rotate(45 19.200 6.400)"/></svg>
<div class="a" style="left:2274px;top:1168.36px;width:48px;height:45px;border-radius:6.500px;background:#FF5B5C"></div>
<svg style="position:absolute;left:2286px;top:1177.86px" width="26" height="28" viewBox="0 0 26 28" ><path d="M2 7.700h21" stroke="#fff" stroke-width="2.400"/><path d="M7.700 7V3.200h9.600V7" fill="none" stroke="#fff" stroke-width="2.400"/><path d="M5.300 8v15.500h14.400V8" fill="none" stroke="#fff" stroke-width="2.600"/><path d="M10.200 10.500v10M14.800 10.500v10" stroke="#fff" stroke-width="2.400"/></svg>
<svg style="position:absolute;left:1091px;top:562.9px;overflow:hidden" width="60" height="41" viewBox="0 0 60 41"><defs><linearGradient id="g1" x1="0" y1="0" x2="0" y2="1"><stop offset="0" stop-color="#9a9da2"/><stop offset="0.4" stop-color="#b9bbbf"/><stop offset="0.45" stop-color="#6a6866"/><stop offset="1" stop-color="#3e3c3c"/></linearGradient><filter id="bg1" x="-10%" y="-10%" width="120%" height="120%"><feGaussianBlur stdDeviation="0.55"/></filter><filter id="ng1" x="0" y="0" width="100%" height="100%"><feTurbulence type="fractalNoise" baseFrequency="0.55" numOctaves="2" seed="49"/><feColorMatrix type="matrix" values="0 0 0 0 0.5  0 0 0 0 0.5  0 0 0 0 0.5  1.6 1.6 0 0 -1.1"/></filter></defs><rect width="60" height="41" fill="url(#g1)"/><g filter="url(#bg1)"><ellipse cx="30" cy="6" rx="9" ry="7" fill="#e6e8ea"/><ellipse cx="12" cy="5" rx="12" ry="5" fill="#8f9398"/><rect x="37" y="0" width="12" height="4" fill="#3f6fb4"/><path d="M8 19L33 8 52 0h8v41H0V19z" fill="#454444"/><path d="M30 12l22-10 8 2v26H34z" fill="#333233"/><rect x="0" y="17" width="9" height="13" fill="#5a5048"/><rect x="3" y="17.500" width="19" height="3" fill="#8a5a20"/><rect x="4" y="20" width="18" height="9" fill="#dc9c1e"/><rect x="9" y="23" width="7" height="3" fill="#3c5c9c"/><rect x="1" y="27" width="22" height="5" fill="#2c2826"/><path d="M24 18l5-2 4 4v8h-9z" fill="#b98a2c"/><rect x="28" y="22" width="8" height="7" fill="#caa040"/><rect x="38" y="22" width="12" height="7" fill="#c08a24"/><rect x="37" y="27" width="14" height="4" fill="#2c2a28"/><rect x="0" y="31" width="60" height="10" fill="#4c4846"/><ellipse cx="18" cy="39" rx="8" ry="7" fill="#a8a29e"/><ellipse cx="35" cy="37" rx="8" ry="3" fill="#6a6664"/><rect x="40" y="35" width="20" height="6" fill="#2c2c2c"/></g><rect width="60" height="41" filter="url(#ng1)" opacity=".35" style="mix-blend-mode:overlay"/><rect width="60" height="41" filter="url(#ng1)" opacity=".18" transform="translate(60 0) scale(-1 1)" style="mix-blend-mode:multiply"/></svg>
<svg style="position:absolute;left:1091px;top:642.9px;overflow:hidden" width="60" height="32" viewBox="0 0 60 32"><defs><linearGradient id="g2" x1="0" y1="0" x2="0" y2="1"><stop offset="0" stop-color="#8a6474"/><stop offset="0.12" stop-color="#c88a4a"/><stop offset="0.2" stop-color="#7a5428"/><stop offset="0.3" stop-color="#b88a3c"/><stop offset="0.55" stop-color="#a08448"/><stop offset="0.75" stop-color="#6a4a20"/><stop offset="1" stop-color="#a8602a"/></linearGradient><filter id="bg2" x="-10%" y="-10%" width="120%" height="120%"><feGaussianBlur stdDeviation="0.55"/></filter><filter id="ng2" x="0" y="0" width="100%" height="100%"><feTurbulence type="fractalNoise" baseFrequency="0.55" numOctaves="2" seed="50"/><feColorMatrix type="matrix" values="0 0 0 0 0.5  0 0 0 0 0.5  0 0 0 0 0.5  1.6 1.6 0 0 -1.1"/></filter></defs><rect width="60" height="32" fill="url(#g2)"/><g filter="url(#bg2)"><ellipse cx="24" cy="4.500" rx="9" ry="2.500" fill="#ffd862"/><ellipse cx="24" cy="4" rx="20" ry="3" fill="#e8a04a" opacity=".6"/><ellipse cx="42" cy="15" rx="12" ry="5" fill="#8a8270" opacity=".8"/><ellipse cx="18" cy="12" rx="14" ry="4" fill="#c89a48" opacity=".8"/><rect x="4" y="20" width="14" height="8" fill="#5a3a14"/><rect x="19" y="20.500" width="15" height="5" fill="#c8961e"/><rect x="21" y="24" width="13" height="4.500" fill="#3c2a10"/><rect x="46" y="20" width="10" height="8" fill="#4a3016"/><rect x="0" y="28.500" width="60" height="3.500" fill="#a8642a"/></g><rect width="60" height="32" filter="url(#ng2)" opacity=".35" style="mix-blend-mode:overlay"/><rect width="60" height="32" filter="url(#ng2)" opacity=".18" transform="translate(60 0) scale(-1 1)" style="mix-blend-mode:multiply"/></svg>
<svg style="position:absolute;left:1091px;top:719.0px;overflow:hidden" width="60" height="32.6" viewBox="0 0 60 32.6"><defs><linearGradient id="g3" x1="0" y1="0" x2="0" y2="1"><stop offset="0" stop-color="#d8806a"/><stop offset="0.3" stop-color="#e8b090"/><stop offset="0.55" stop-color="#a89890"/><stop offset="0.75" stop-color="#8a8684"/><stop offset="1" stop-color="#5e5652"/></linearGradient><filter id="bg3" x="-10%" y="-10%" width="120%" height="120%"><feGaussianBlur stdDeviation="0.55"/></filter><filter id="ng3" x="0" y="0" width="100%" height="100%"><feTurbulence type="fractalNoise" baseFrequency="0.55" numOctaves="2" seed="51"/><feColorMatrix type="matrix" values="0 0 0 0 0.5  0 0 0 0 0.5  0 0 0 0 0.5  1.6 1.6 0 0 -1.1"/></filter></defs><rect width="60" height="32.6" fill="url(#g3)"/><g filter="url(#bg3)"><ellipse cx="4" cy="14" rx="12" ry="7" fill="#f2dab0"/><ellipse cx="50" cy="6" rx="14" ry="5" fill="#e08a58"/><rect x="54" y="0" width="6" height="14" fill="#9a9aa8"/><ellipse cx="18" cy="2" rx="14" ry="3" fill="#d07a68"/><path d="M27 9l7-4 8 2 8 6-6 3-3 6H22l-3-11z" fill="#5a5048"/><path d="M19 10h16v10H20z" fill="#6a5a4a"/><rect x="21" y="14" width="12" height="8" fill="#3e3834"/><ellipse cx="44" cy="17" rx="8" ry="4" fill="#9a8e88" opacity=".8"/><rect x="8" y="16" width="8" height="4" fill="#4a4038"/><rect x="18.500" y="24" width="2.500" height="5" fill="#1c1c2c"/></g><rect width="60" height="32.6" filter="url(#ng3)" opacity=".35" style="mix-blend-mode:overlay"/><rect width="60" height="32.6" filter="url(#ng3)" opacity=".18" transform="translate(60 0) scale(-1 1)" style="mix-blend-mode:multiply"/></svg>
<svg style="position:absolute;left:1091px;top:796px;overflow:hidden" width="60" height="30" viewBox="0 0 60 30"><defs><linearGradient id="g4" x1="0" y1="0" x2="0" y2="1"><stop offset="0" stop-color="#5a94d6"/><stop offset="0.35" stop-color="#9cc0e6"/><stop offset="0.55" stop-color="#c8d4dc"/><stop offset="0.7" stop-color="#5a4a3c"/><stop offset="1" stop-color="#242428"/></linearGradient><filter id="bg4" x="-10%" y="-10%" width="120%" height="120%"><feGaussianBlur stdDeviation="0.55"/></filter><filter id="ng4" x="0" y="0" width="100%" height="100%"><feTurbulence type="fractalNoise" baseFrequency="0.55" numOctaves="2" seed="52"/><feColorMatrix type="matrix" values="0 0 0 0 0.5  0 0 0 0 0.5  0 0 0 0 0.5  1.6 1.6 0 0 -1.1"/></filter></defs><rect width="60" height="30" fill="url(#g4)"/><g filter="url(#bg4)"><ellipse cx="18" cy="16" rx="7" ry="6" fill="#fdfaf0"/><path d="M35 4l6-3 3 2-1 6-5 1-3-2z" fill="#4e4e50"/><path d="M42 3l3 2 2.500 10h-3z" fill="#d88a3a"/><path d="M52 8l8-2v10h-9z" fill="#8a6a4a"/><rect x="3" y="14" width="13" height="3" fill="#4a3a2a"/><rect x="3" y="16" width="12" height="6" fill="#d8a848"/><rect x="6" y="19" width="9" height="4" fill="#2c2824"/><rect x="21" y="14" width="8" height="8" fill="#d8a040"/><rect x="28" y="15" width="9" height="5" fill="#5a5650"/><rect x="22" y="19" width="14" height="4" fill="#2a2624"/><path d="M38 18l8-4 14-2v18H36z" fill="#5e6672"/><ellipse cx="47" cy="22" rx="4" ry="3" fill="#8a92a0"/><ellipse cx="55" cy="26" rx="4" ry="3" fill="#3a3e46"/><path d="M44 13l6-1 2 5-7 1z" fill="#e8c48a"/><rect x="0" y="23" width="38" height="7" fill="#2c2624"/><rect x="14" y="22" width="10" height="6" fill="#8a5a3a" opacity=".8"/></g><rect width="60" height="30" filter="url(#ng4)" opacity=".35" style="mix-blend-mode:overlay"/><rect width="60" height="30" filter="url(#ng4)" opacity=".18" transform="translate(60 0) scale(-1 1)" style="mix-blend-mode:multiply"/></svg>
<svg style="position:absolute;left:1091px;top:871px;overflow:hidden" width="60" height="32.8" viewBox="0 0 60 32.8"><defs><linearGradient id="g5" x1="0" y1="0" x2="0" y2="1"><stop offset="0" stop-color="#c6a88e"/><stop offset="0.5" stop-color="#c0a088"/><stop offset="0.8" stop-color="#a88670"/><stop offset="0.84" stop-color="#a86a48"/><stop offset="1" stop-color="#b0704a"/></linearGradient><filter id="bg5" x="-10%" y="-10%" width="120%" height="120%"><feGaussianBlur stdDeviation="0.55"/></filter><filter id="ng5" x="0" y="0" width="100%" height="100%"><feTurbulence type="fractalNoise" baseFrequency="0.55" numOctaves="2" seed="53"/><feColorMatrix type="matrix" values="0 0 0 0 0.5  0 0 0 0 0.5  0 0 0 0 0.5  1.6 1.6 0 0 -1.1"/></filter></defs><rect width="60" height="32.8" fill="url(#g5)"/><g filter="url(#bg5)"><ellipse cx="18" cy="11" rx="9" ry="7" fill="#ecd4b2" opacity=".75"/><ellipse cx="13" cy="10" rx="2.500" ry="2" fill="#f0a850"/><ellipse cx="8" cy="20" rx="10" ry="6" fill="#a89078" opacity=".7"/><path d="M36 6l6-3 8 1 3 4H36z" fill="#4a4444"/><path d="M27 7.500l24-1 1 2.500-24 1z" fill="#e8b020"/><rect x="29" y="10" width="18" height="14" fill="#d8a020"/><rect x="33" y="12" width="9" height="9" fill="#9a8a78"/><rect x="26.500" y="11" width="2.500" height="8" fill="#4a4238"/><path d="M46 11l9 1 3 6v8H46z" fill="#3a3434"/><ellipse cx="52" cy="22" rx="4.500" ry="6" fill="#262222"/><rect x="31" y="23" width="5" height="4.500" fill="#2c2826"/></g><rect width="60" height="32.8" filter="url(#ng5)" opacity=".35" style="mix-blend-mode:overlay"/><rect width="60" height="32.8" filter="url(#ng5)" opacity=".18" transform="translate(60 0) scale(-1 1)" style="mix-blend-mode:multiply"/></svg>
<svg style="position:absolute;left:1091px;top:947.1px;overflow:hidden" width="60" height="32.7" viewBox="0 0 60 32.7"><defs><linearGradient id="g6" x1="0" y1="0" x2="0" y2="1"><stop offset="0" stop-color="#5a3e4e"/><stop offset="0.08" stop-color="#b8503c"/><stop offset="0.25" stop-color="#e8963e"/><stop offset="0.33" stop-color="#4a3028"/><stop offset="0.4" stop-color="#c89848"/><stop offset="0.62" stop-color="#b08a50"/><stop offset="1" stop-color="#6a5c48"/></linearGradient><filter id="bg6" x="-10%" y="-10%" width="120%" height="120%"><feGaussianBlur stdDeviation="0.55"/></filter><filter id="ng6" x="0" y="0" width="100%" height="100%"><feTurbulence type="fractalNoise" baseFrequency="0.55" numOctaves="2" seed="54"/><feColorMatrix type="matrix" values="0 0 0 0 0.5  0 0 0 0 0.5  0 0 0 0 0.5  1.6 1.6 0 0 -1.1"/></filter></defs><rect width="60" height="32.7" fill="url(#g6)"/><g filter="url(#bg6)"><ellipse cx="36" cy="7.500" rx="14" ry="2.500" fill="#f6b44a"/><ellipse cx="10" cy="5" rx="10" ry="2" fill="#c83c34" opacity=".8"/><path d="M0 18l14-2 10 6 2 10.700H0z" fill="#8a8a8e"/><ellipse cx="9" cy="28" rx="8" ry="3" fill="#6a7480"/><ellipse cx="14" cy="21" rx="7" ry="3" fill="#b8a890"/><path d="M26 19l6-1.500 26 3.500-9 5-19-3z" fill="#dcaa1e"/><path d="M25 19l4-1.500 2 2.500-3 1.500z" fill="#5a3c14"/><path d="M30 24l20 2 9-3v9.700H29z" fill="#3a2c14"/><circle cx="38" cy="29" r="3.200" fill="#8a6a1e"/><circle cx="52" cy="30" r="3" fill="#a8801e"/><rect x="52" y="23" width="8" height="4" fill="#c89a24"/></g><rect width="60" height="32.7" filter="url(#ng6)" opacity=".35" style="mix-blend-mode:overlay"/><rect width="60" height="32.7" filter="url(#ng6)" opacity=".18" transform="translate(60 0) scale(-1 1)" style="mix-blend-mode:multiply"/></svg>
<svg style="position:absolute;left:1091px;top:1023px;overflow:hidden" width="60" height="32.8" viewBox="0 0 60 32.8"><defs><linearGradient id="g7" x1="0" y1="0" x2="0" y2="1"><stop offset="0" stop-color="#2c0e06"/><stop offset="0.1" stop-color="#7a2c10"/><stop offset="0.45" stop-color="#9a4216"/><stop offset="0.7" stop-color="#a84e1c"/><stop offset="0.74" stop-color="#d8a070"/><stop offset="0.78" stop-color="#9a4a1c"/><stop offset="1" stop-color="#8a3a12"/></linearGradient><filter id="bg7" x="-10%" y="-10%" width="120%" height="120%"><feGaussianBlur stdDeviation="0.55"/></filter><filter id="ng7" x="0" y="0" width="100%" height="100%"><feTurbulence type="fractalNoise" baseFrequency="0.55" numOctaves="2" seed="55"/><feColorMatrix type="matrix" values="0 0 0 0 0.5  0 0 0 0 0.5  0 0 0 0 0.5  1.6 1.6 0 0 -1.1"/></filter></defs><rect width="60" height="32.8" fill="url(#g7)"/><g filter="url(#bg7)"><path d="M0 9l14-1 4-3h4l-3 4 14-2v3L20 14 4 13z" fill="#3a1608"/><rect x="15" y="5.500" width="3" height="3" fill="#d8a040"/><path d="M2 13c5-3 11-2 14 2 3 4 1 8-3 9-5 1-9 1-13 0v-6z" fill="#f2d2a2" opacity=".85"/><path d="M0 22c10 2 20 1 26-1l2 2.500c-8 2-18 2.500-28 1.500z" fill="#e8bc8a"/><path d="M28 12c6-3 14-3 20 0 5 3 8 6 12 7v-9l-18-3z" fill="#a04818" opacity=".9"/><ellipse cx="42" cy="17" rx="14" ry="5" fill="#8a3412"/><rect x="33" y="11" width="5" height="1.500" fill="#8a98a8"/><rect x="38" y="10" width="6" height="2" fill="#a8b0b8"/><rect x="44" y="10" width="4" height="1.500" fill="#e8b030"/><rect x="25" y="19" width="5" height="4" fill="#3c2818"/><rect x="29" y="20" width="9" height="2.500" fill="#c88a2a"/><rect x="37" y="18.500" width="7" height="3" fill="#3a2c24"/><rect x="36" y="23" width="8" height="1.500" fill="#f0d0a0"/></g><rect width="60" height="32.8" filter="url(#ng7)" opacity=".35" style="mix-blend-mode:overlay"/><rect width="60" height="32.8" filter="url(#ng7)" opacity=".18" transform="translate(60 0) scale(-1 1)" style="mix-blend-mode:multiply"/></svg>
<svg style="position:absolute;left:1091px;top:1094.1px;overflow:hidden" width="60" height="41.7" viewBox="0 0 60 41.7"><defs><linearGradient id="g8" x1="0" y1="0" x2="0" y2="1"><stop offset="0" stop-color="#6a4428"/><stop offset="0.5" stop-color="#8a5a30"/><stop offset="0.68" stop-color="#5a4030"/><stop offset="1" stop-color="#2e2a2c"/></linearGradient><filter id="bg8" x="-10%" y="-10%" width="120%" height="120%"><feGaussianBlur stdDeviation="0.55"/></filter><filter id="ng8" x="0" y="0" width="100%" height="100%"><feTurbulence type="fractalNoise" baseFrequency="0.55" numOctaves="2" seed="56"/><feColorMatrix type="matrix" values="0 0 0 0 0.5  0 0 0 0 0.5  0 0 0 0 0.5  1.6 1.6 0 0 -1.1"/></filter></defs><rect width="60" height="41.7" fill="url(#g8)"/><g filter="url(#bg8)"><path d="M22 0h38v14z" fill="#8eb4e2"/><path d="M30 0h30v8z" fill="#a8c8ec"/><path d="M44 11l16 4v12l-16-2z" fill="#b08058"/><path d="M0 0h26l-4 4-22 3z" fill="#3a2818"/><path d="M0 8l20-3 12 3 8 12-6 5-14 2L8 36 0 30z" fill="#7a4e28"/><path d="M12 12l14-1 10 10-12 3-8-2z" fill="#6a4a3a"/><path d="M4 8l22-2 4 3-24 3z" fill="#d89a40"/><ellipse cx="23" cy="9" rx="4" ry="1.800" fill="#ffe08a"/><path d="M30 9l8 12-3 2-8-12z" fill="#c88a30"/><path d="M20 25l14-3 4 1-6 4-10 2z" fill="#d8a030"/><circle cx="36" cy="21.500" r="2" fill="#fff2b0"/><circle cx="41.500" cy="21.500" r="2" fill="#fff2b0"/><ellipse cx="39" cy="21.500" rx="6" ry="3" fill="#ffc850" opacity=".5"/><rect x="43" y="12" width="5" height="9" fill="#c8b490"/><path d="M0 12l12 18-2 11.700H0z" fill="#4a3424"/><path d="M10 30l20-5 30 2v14.700H8z" fill="#38383a"/><path d="M0 34l16-2 10 9.700H0z" fill="#2a2420"/></g><rect width="60" height="41.7" filter="url(#ng8)" opacity=".35" style="mix-blend-mode:overlay"/><rect width="60" height="41.7" filter="url(#ng8)" opacity=".18" transform="translate(60 0) scale(-1 1)" style="mix-blend-mode:multiply"/></svg>
<svg style="position:absolute;left:1091px;top:1171px;overflow:hidden" width="60" height="40" viewBox="0 0 60 40"><defs><linearGradient id="g9" x1="0" y1="0" x2="0" y2="1"><stop offset="0" stop-color="#7a4a40"/><stop offset="0.2" stop-color="#7c4c3a"/><stop offset="0.3" stop-color="#8a5430"/><stop offset="0.7" stop-color="#9a5a30"/><stop offset="0.8" stop-color="#b87840"/><stop offset="1" stop-color="#b06a34"/></linearGradient><filter id="bg9" x="-10%" y="-10%" width="120%" height="120%"><feGaussianBlur stdDeviation="0.55"/></filter><filter id="ng9" x="0" y="0" width="100%" height="100%"><feTurbulence type="fractalNoise" baseFrequency="0.55" numOctaves="2" seed="57"/><feColorMatrix type="matrix" values="0 0 0 0 0.5  0 0 0 0 0.5  0 0 0 0 0.5  1.6 1.6 0 0 -1.1"/></filter></defs><rect width="60" height="40" fill="url(#g9)"/><g filter="url(#bg9)"><ellipse cx="52" cy="5" rx="8" ry="2.500" fill="#c8906a"/><path d="M19 13l13-10 4 2-2 4-12 9z" fill="#e86a30"/><path d="M20 14l12-8 1 1.500-11 8.500z" fill="#2c1c14"/><ellipse cx="22" cy="8" rx="2" ry="2" fill="#e8d8d0"/><rect x="33" y="9" width="7.500" height="5.500" fill="#5a7090"/><rect x="48" y="10" width="10" height="6" fill="#8a8a88"/><rect x="49" y="15" width="6" height="6" fill="#4a3a30"/><path d="M36 15l10-1 2 7-10 1z" fill="#e0902a"/><ellipse cx="39" cy="18" rx="3" ry="2" fill="#e85a30"/><rect x="36" y="21.500" width="14" height="3" fill="#2c2018"/><rect x="3" y="16" width="14" height="3.500" fill="#1a1410"/><rect x="3" y="19.500" width="9" height="7" fill="#c8902a"/><rect x="5" y="21" width="5" height="3.500" fill="#8a7a60"/><rect x="18" y="16.500" width="9" height="5" fill="#d8a050"/><rect x="12" y="21" width="5" height="7" fill="#2a2018"/><rect x="18" y="22" width="4.500" height="6" fill="#1e1814"/><rect x="4" y="26" width="8" height="2.500" fill="#2a2018"/><ellipse cx="12" cy="36" rx="12" ry="3" fill="#d8a468"/><ellipse cx="40" cy="35" rx="12" ry="2" fill="#d89a58"/><rect x="0" y="38" width="60" height="2" fill="#9a5424"/></g><rect width="60" height="40" filter="url(#ng9)" opacity=".35" style="mix-blend-mode:overlay"/><rect width="60" height="40" filter="url(#ng9)" opacity=".18" transform="translate(60 0) scale(-1 1)" style="mix-blend-mode:multiply"/></svg>
<div class="a" style="left:2146.100px;top:1283.300px;width:116.600px;height:48.300px;box-sizing:border-box;border:1.500px solid #dfe3e7;border-radius:6px;background:#f2f4f4"></div>
<div class="a" style="left:2317px;top:1283.300px;width:48.500px;height:49.800px;box-sizing:border-box;border:1.500px solid #dfe3e7;border-left:none;border-radius:0 7px 7px 0;background:#fff"></div>
<div class="a" style="left:2271.700px;top:1284px;width:46.200px;height:49.100px;border-radius:6px;background:#5A8DEE"></div>
<div class="a" style="left:2374.200px;top:1283.300px;width:73.500px;height:48.300px;box-sizing:border-box;border:1.500px solid #dfe3e7;border-radius:6px;background:#fff"></div>
<span class="t " style="left:476.6px;top:212px;font-size:28px;font-weight:400;color:#475f7b;letter-spacing:1.09px">Package Lists</span>
<span class="t " style="left:2291.6px;top:229px;font-size:19px;font-weight:700;color:#fff;letter-spacing:0.29px">Add New Item</span>
<span class="t " style="left:2142.3px;top:337px;font-size:19px;font-weight:400;color:#596f88;letter-spacing:-0.38px">Search:</span>
<span class="t wb" style="left:511.9px;top:271px;font-size:21px;font-weight:400;color:#fff;letter-spacing:0.77px">Copy</span>
<span class="t wb" style="left:630.7px;top:271px;font-size:21px;font-weight:400;color:#fff;letter-spacing:0.00px">PDF</span>
<span class="t wb" style="left:741.8px;top:271px;font-size:21px;font-weight:400;color:#fff;letter-spacing:0.13px">JSON</span>
<span class="t wb" style="left:865.3px;top:271px;font-size:21px;font-weight:400;color:#fff;letter-spacing:1.43px">Print</span>
<span class="t " style="left:490.7px;top:416px;font-size:17px;font-weight:700;color:#475f7b;letter-spacing:2.95px">S.N</span>
<span class="t " style="left:640.8px;top:416px;font-size:17px;font-weight:700;color:#475f7b;letter-spacing:2.07px">NAME</span>
<span class="t " style="left:1091.1px;top:416px;font-size:17px;font-weight:700;color:#475f7b;letter-spacing:1.80px">PHOTO</span>
<span class="t " style="left:1297.1px;top:416px;font-size:17px;font-weight:700;color:#475f7b;letter-spacing:2.40px">PRICE</span>
<span class="t " style="left:1491.8px;top:416px;font-size:17px;font-weight:700;color:#475f7b;letter-spacing:2.24px">VALIDITY</span>
<span class="t " style="left:1737.4px;top:416px;font-size:17px;font-weight:700;color:#475f7b;letter-spacing:2.12px">HOURS</span>
<span class="t " style="left:1946.6px;top:416px;font-size:17px;font-weight:700;color:#475f7b;letter-spacing:2.42px">STATUS</span>
<span class="t " style="left:2168.0px;top:416px;font-size:17px;font-weight:700;color:#475f7b;letter-spacing:2.16px">ACTIVE</span>
<span class="t " style="left:477.3px;top:1254px;font-size:22px;font-weight:400;color:#6f8197;letter-spacing:0.68px">Showing 1 to 10 of 11 entries</span>
<span class="t " style="left:2157.9px;top:1298px;font-size:21.5px;font-weight:700;color:#8494a7;letter-spacing:0.20px">Previous</span>
<span class="t " style="left:2144.8px;width:300px;text-align:center;top:1298px;font-size:21.5px;font-weight:700;color:#fff">1</span>
<span class="t " style="left:2191.7px;width:300px;text-align:center;top:1298px;font-size:21.5px;font-weight:400;color:#304156">2</span>
<span class="t " style="left:2385.8px;top:1298px;font-size:21.5px;font-weight:700;color:#5A8DEE;letter-spacing:0.93px">Next</span>
<span class="t c" style="left:490.7px;top:490px;letter-spacing:0.00px">1</span>
<span class="t c" style="left:1297.1px;top:490px;letter-spacing:0.30px">10</span>
<span class="t c" style="left:1490.8px;top:490px;letter-spacing:1.05px">6Days</span>
<span class="t c" style="left:1737.4px;top:490px;letter-spacing:1.06px">100Hours</span>
<span class="t c" style="left:1946.6px;top:490px;letter-spacing:1.52px">active</span>
<span class="t c" style="left:490.7px;top:574px;letter-spacing:0.00px">2</span>
<span class="t c" style="left:641.8px;top:574px;letter-spacing:-0.67px">VIP1</span>
<span class="t c" style="left:1297.1px;top:574px;letter-spacing:3.20px">50</span>
<span class="t c" style="left:1490.8px;top:574px;letter-spacing:1.16px">30Days</span>
<span class="t c" style="left:1737.4px;top:574px;letter-spacing:1.14px">720Hours</span>
<span class="t c" style="left:1946.6px;top:574px;letter-spacing:1.52px">active</span>
<span class="t c" style="left:490.7px;top:650px;letter-spacing:0.00px">3</span>
<span class="t c" style="left:641.8px;top:650px;letter-spacing:0.37px">VIP2</span>
<span class="t c" style="left:1297.1px;top:650px;letter-spacing:2.23px">2400</span>
<span class="t c" style="left:1490.8px;top:650px;letter-spacing:1.12px">60Days</span>
<span class="t c" style="left:1737.4px;top:650px;letter-spacing:0.95px">1440Hours</span>
<span class="t c" style="left:1946.6px;top:650px;letter-spacing:1.52px">active</span>
<span class="t c" style="left:491.7px;top:726px;letter-spacing:0.00px">4</span>
<span class="t c" style="left:641.8px;top:726px;letter-spacing:0.03px">VIP3</span>
<span class="t c" style="left:1297.1px;top:726px;letter-spacing:2.40px">5000</span>
<span class="t c" style="left:1490.8px;top:726px;letter-spacing:1.12px">60Days</span>
<span class="t c" style="left:1737.4px;top:726px;letter-spacing:0.95px">1440Hours</span>
<span class="t c" style="left:1946.6px;top:726px;letter-spacing:1.52px">active</span>
<span class="t c" style="left:490.7px;top:802px;letter-spacing:0.00px">5</span>
<span class="t c" style="left:641.8px;top:802px;letter-spacing:0.20px">VIP4</span>
<span class="t c" style="left:1297.1px;top:802px;letter-spacing:2.77px">8000</span>
<span class="t c" style="left:1490.8px;top:802px;letter-spacing:1.12px">60Days</span>
<span class="t c" style="left:1737.4px;top:802px;letter-spacing:0.95px">1440Hours</span>
<span class="t c" style="left:1946.6px;top:802px;letter-spacing:1.52px">active</span>
<span class="t c" style="left:490.7px;top:878px;letter-spacing:0.00px">6</span>
<span class="t c" style="left:641.8px;top:878px;letter-spacing:0.03px">VIP5</span>
<span class="t c" style="left:1297.1px;top:878px;letter-spacing:1.45px">12000</span>
<span class="t c" style="left:1490.8px;top:878px;letter-spacing:0.93px">365Days</span>
<span class="t c" style="left:1737.4px;top:878px;letter-spacing:1.09px">8760Hours</span>
<span class="t c" style="left:1946.6px;top:878px;letter-spacing:1.52px">active</span>
<span class="t c" style="left:490.7px;top:954px;letter-spacing:0.00px">7</span>
<span class="t c" style="left:641.8px;top:954px;letter-spacing:0.03px">VIP6</span>
<span class="t c" style="left:1297.1px;top:954px;letter-spacing:1.72px">18000</span>
<span class="t c" style="left:1490.8px;top:954px;letter-spacing:1.12px">60Days</span>
<span class="t c" style="left:1737.4px;top:954px;letter-spacing:0.95px">1440Hours</span>
<span class="t c" style="left:1946.6px;top:954px;letter-spacing:1.52px">active</span>
<span class="t c" style="left:490.7px;top:1030px;letter-spacing:0.00px">8</span>
<span class="t c" style="left:641.8px;top:1030px;letter-spacing:0.10px">VIP7</span>
<span class="t c" style="left:1297.1px;top:1030px;letter-spacing:2.25px">25000</span>
<span class="t c" style="left:1490.8px;top:1030px;letter-spacing:1.12px">60Days</span>
<span class="t c" style="left:1737.4px;top:1030px;letter-spacing:0.95px">1440Hours</span>
<span class="t c" style="left:1946.6px;top:1030px;letter-spacing:1.52px">active</span>
<span class="t c" style="left:490.7px;top:1106px;letter-spacing:0.00px">9</span>
<span class="t c" style="left:641.8px;top:1106px;letter-spacing:0.03px">VIP8</span>
<span class="t c" style="left:1297.1px;top:1106px;letter-spacing:2.43px">36000</span>
<span class="t c" style="left:1490.8px;top:1106px;letter-spacing:1.12px">60Days</span>
<span class="t c" style="left:1737.4px;top:1106px;letter-spacing:0.95px">1440Hours</span>
<span class="t c" style="left:1946.6px;top:1106px;letter-spacing:1.52px">active</span>
<span class="t c" style="left:490.7px;top:1182px;letter-spacing:0.30px">10</span>
<span class="t c" style="left:641.8px;top:1182px;letter-spacing:0.33px">VIP9</span>
<span class="t c" style="left:1297.1px;top:1182px;letter-spacing:2.53px">50000</span>
<span class="t c" style="left:1490.8px;top:1182px;letter-spacing:1.12px">60Days</span>
<span class="t c" style="left:1737.4px;top:1182px;letter-spacing:0.95px">1440Hours</span>
<span class="t c" style="left:1946.6px;top:1182px;letter-spacing:1.52px">active</span>
</main>
<aside class="g sidebar">
<div class="a" style="left:388.500px;top:69.500px;width:1.500px;height:1395px;background:#e0e4e9"></div>
<svg style="position:absolute;left:326px;top:107px" width="32" height="32" viewBox="0 0 32 32" ><circle cx="15.700" cy="15.500" r="11.300" fill="none" stroke="#5A8DEE" stroke-width="2.600"/><circle cx="15.700" cy="15.500" r="4.300" fill="none" stroke="#5A8DEE" stroke-width="2.600"/></svg>
<svg style="position:absolute;left:40px;top:188px" width="34" height="32" viewBox="0 0 34 32" ><path d="M4.500 16.200L16.300 4.800 28.100 16.200M7.500 14v13.600h17.600V14M12.800 27.500V18.800h7.200v8.700" fill="none" stroke="#0c0c0c" stroke-width="3" stroke-linejoin="round" stroke-linecap="round"/></svg>
<div class="a" style="left:23px;top:310px;width:344px;height:244.500px;box-sizing:border-box;border:1.200px solid #dfe3ea;border-radius:6px;background:#fafbfb;overflow:hidden"><div class="a" style="left:0;top:57.500px;width:100%;height:61.500px;background:#e2eafb"></div></div>
<svg style="position:absolute;left:44px;top:323px" width="28" height="32" viewBox="0 0 28 32" ><path d="M4.600 5.600v20.800L20 16z" fill="none" stroke="#5A8DEE" stroke-width="3" stroke-linejoin="miter"/></svg>
<svg style="position:absolute;left:334.40000000000003px;top:336.15px" width="14.4" height="10.7" viewBox="0 0 14.4 10.7" ><path d="M1.500 2.500L7.2 8.2 12.9 2.500" fill="none" stroke="#8293a8" stroke-width="2.2"/></svg>
<svg style="position:absolute;left:59.0px;top:389.4px" width="18.7" height="20" viewBox="0 0 18.7 20" ><path d="M1.500 10h12.7M7.499999999999999 2.600l7.400 7.400-7.400 7.400" fill="none" stroke="#5A8DEE" stroke-width="2.4" stroke-linecap="round" stroke-linejoin="round"/></svg>
<svg style="position:absolute;left:59.0px;top:451.3px" width="18.7" height="20" viewBox="0 0 18.7 20" ><path d="M1.500 10h12.7M7.499999999999999 2.600l7.400 7.400-7.400 7.400" fill="none" stroke="#0c0c0c" stroke-width="2.4" stroke-linecap="round" stroke-linejoin="round"/></svg>
<svg style="position:absolute;left:59.0px;top:512.3px" width="18.7" height="20" viewBox="0 0 18.7 20" ><path d="M1.500 10h12.7M7.499999999999999 2.600l7.400 7.400-7.400 7.400" fill="none" stroke="#0c0c0c" stroke-width="2.4" stroke-linecap="round" stroke-linejoin="round"/></svg>
<svg style="position:absolute;left:44px;top:568.6px" width="28" height="32" viewBox="0 0 28 32" ><path d="M4.600 5.600v20.800L20 16z" fill="none" stroke="#0c0c0c" stroke-width="3" stroke-linejoin="miter"/></svg>
<svg style="position:absolute;left:335.0px;top:578.75px" width="14.4" height="10.7" viewBox="0 0 14.4 10.7" ><path d="M1.500 8.2L7.2 2.500 12.9 8.2" fill="none" stroke="#8293a8" stroke-width="2.2"/></svg>
<svg style="position:absolute;left:46.8px;top:636.05px" width="21.7" height="20" viewBox="0 0 21.7 20" ><path d="M1.500 10h15.7M10.5 2.600l7.400 7.400-7.400 7.400" fill="none" stroke="#0c0c0c" stroke-width="2.9" stroke-linecap="round" stroke-linejoin="round"/></svg>
<svg style="position:absolute;left:46.8px;top:697.5px" width="21.7" height="20" viewBox="0 0 21.7 20" ><path d="M1.500 10h15.7M10.5 2.600l7.400 7.400-7.400 7.400" fill="none" stroke="#0c0c0c" stroke-width="2.9" stroke-linecap="round" stroke-linejoin="round"/></svg>
<svg style="position:absolute;left:44px;top:752.95px" width="28" height="32" viewBox="0 0 28 32" ><path d="M4.600 5.600v20.800L20 16z" fill="none" stroke="#0c0c0c" stroke-width="3" stroke-linejoin="miter"/></svg>
<svg style="position:absolute;left:335.0px;top:763.1px" width="14.4" height="10.7" viewBox="0 0 14.4 10.7" ><path d="M1.500 8.2L7.2 2.500 12.9 8.2" fill="none" stroke="#8293a8" stroke-width="2.2"/></svg>
<svg style="position:absolute;left:44px;top:814.4px" width="28" height="32" viewBox="0 0 28 32" ><path d="M4.600 5.600v20.800L20 16z" fill="none" stroke="#0c0c0c" stroke-width="3" stroke-linejoin="miter"/></svg>
<svg style="position:absolute;left:335.0px;top:824.55px" width="14.4" height="10.7" viewBox="0 0 14.4 10.7" ><path d="M1.500 8.2L7.2 2.500 12.9 8.2" fill="none" stroke="#8293a8" stroke-width="2.2"/></svg>
<svg style="position:absolute;left:46.8px;top:881.85px" width="21.7" height="20" viewBox="0 0 21.7 20" ><path d="M1.500 10h15.7M10.5 2.600l7.400 7.400-7.400 7.400" fill="none" stroke="#0c0c0c" stroke-width="2.9" stroke-linecap="round" stroke-linejoin="round"/></svg>
<svg style="position:absolute;left:44px;top:937.3px" width="28" height="32" viewBox="0 0 28 32" ><path d="M4.600 5.600v20.800L20 16z" fill="none" stroke="#0c0c0c" stroke-width="3" stroke-linejoin="miter"/></svg>
<svg style="position:absolute;left:335.0px;top:947.4499999999999px" width="14.4" height="10.7" viewBox="0 0 14.4 10.7" ><path d="M1.500 8.2L7.2 2.500 12.9 8.2" fill="none" stroke="#8293a8" stroke-width="2.2"/></svg>
<span class="t sb" style="left:28.5px;top:114px;font-size:40px;font-weight:400;color:#475f7b;letter-spacing:1.01px">mining power</span>
<span class="t sb" style="left:98.5px;top:194px;font-size:22px;font-weight:400;color:#0c0c0c;letter-spacing:1.00px">Dashboard</span>
<span class="t " style="left:41.1px;top:277px;font-size:17px;font-weight:400;color:#b6bec9;letter-spacing:1.70px">APPS</span>
<span class="t sb" style="left:99.2px;top:328px;font-size:22px;font-weight:400;color:#0c0c0c;letter-spacing:0.13px">VIPs</span>
<span class="t sb" style="left:109.8px;top:389px;font-size:22px;font-weight:400;color:#5A8DEE;letter-spacing:0.35px">Add VIP</span>
<span class="t sb" style="left:109.8px;top:451px;font-size:22px;font-weight:400;color:#0c0c0c;letter-spacing:0.58px">Vip Slider</span>
<span class="t sb" style="left:107.8px;top:512px;font-size:22px;font-weight:400;color:#0c0c0c;letter-spacing:1.01px">Mining Purchase List</span>
<span class="t sb" style="left:97.6px;top:574px;font-size:22px;font-weight:400;color:#0c0c0c;letter-spacing:0.95px">Manage Bonus</span>
<span class="t sb" style="left:97.6px;top:636px;font-size:22px;font-weight:400;color:#0c0c0c;letter-spacing:1.01px">Manage Customers</span>
<span class="t sb" style="left:97.6px;top:698px;font-size:22px;font-weight:400;color:#0c0c0c;letter-spacing:0.93px">Purchase Record</span>
<span class="t sb" style="left:98.6px;top:759px;font-size:22px;font-weight:400;color:#0c0c0c;letter-spacing:1.07px">Customer Payments</span>
<span class="t sb" style="left:98.6px;top:821px;font-size:22px;font-weight:400;color:#0c0c0c;letter-spacing:0.96px">Customer Withdraws</span>
<span class="t sb" style="left:97.6px;top:881px;font-size:22px;font-weight:400;color:#0c0c0c;letter-spacing:1.03px">Users Notice</span>
<span class="t sb" style="left:98.6px;top:943px;font-size:22px;font-weight:400;color:#0c0c0c;letter-spacing:1.50px">Settings</span>
</aside>
<nav class="g topbar">
<svg style="position:absolute;left:443px;top:104px" width="32" height="32" viewBox="0 0 32 32" ><rect x="2.900" y="6.500" width="25.500" height="19.500" rx="2.200" fill="none" stroke="#475f7b" stroke-width="2"/><path d="M3.300 8.500l12.300 10 12.300-10" fill="none" stroke="#475f7b" stroke-width="2"/></svg>
<svg style="position:absolute;left:498px;top:103px" width="34" height="34" viewBox="0 0 34 34" ><path d="M5 11.500a2 2 0 0 1 2-2h16a2 2 0 0 1 2 2V23a2 2 0 0 1-2 2H14.500L8.300 29.300V25H7a2 2 0 0 1-2-2z" fill="none" stroke="#475f7b" stroke-width="2" stroke-linejoin="round"/><path d="M11 4h17.500a2 2 0 0 1 2 2v11.600" fill="none" stroke="#475f7b" stroke-width="2"/></svg>
<svg style="position:absolute;left:555px;top:104px" width="34" height="34" viewBox="0 0 34 34" ><circle cx="16.600" cy="16" r="12.200" fill="none" stroke="#475f7b" stroke-width="2"/><path d="M10.200 17.200l4 3.700 8.300-8.400" fill="none" stroke="#475f7b" stroke-width="2"/></svg>
<svg style="position:absolute;left:612px;top:103px" width="34" height="34" viewBox="0 0 34 34" ><rect x="5.300" y="7.600" width="22" height="22.200" rx="2" fill="none" stroke="#475f7b" stroke-width="2"/><rect x="5.300" y="7.600" width="22" height="4.200" fill="#475f7b"/><path d="M10.800 3.500v5M22 3.500v5" stroke="#475f7b" stroke-width="2"/></svg>
<svg style="position:absolute;left:668px;top:103px" width="34" height="34" viewBox="0 0 34 34" ><path d="M16.800 5l3.700 8.200 8.900.9-6.700 5.900 1.900 8.700-7.800-4.500-7.800 4.500 1.900-8.700-6.700-5.900 8.900-.9z" fill="none" stroke="#FDAC41" stroke-width="2.100" stroke-linejoin="miter"/></svg>
<svg style="position:absolute;left:1947px;top:108.9px" width="29" height="22.2" viewBox="0 0 29 22.2" ><rect width="29" height="22.200" fill="#fff"/><rect y="0.00" width="29" height="1.710" fill="#c8414b"/><rect y="3.42" width="29" height="1.710" fill="#c8414b"/><rect y="6.83" width="29" height="1.710" fill="#c8414b"/><rect y="10.25" width="29" height="1.710" fill="#c8414b"/><rect y="13.66" width="29" height="1.710" fill="#c8414b"/><rect y="17.07" width="29" height="1.710" fill="#c8414b"/><rect y="20.49" width="29" height="1.710" fill="#c8414b"/><rect width="16.200" height="11.900" fill="#3c4a7e"/><rect x="1.5" y="1.3" width="1.200" height="1.200" fill="#dfe3f0"/><rect x="4.5" y="1.3" width="1.200" height="1.200" fill="#dfe3f0"/><rect x="7.5" y="1.3" width="1.200" height="1.200" fill="#dfe3f0"/><rect x="10.5" y="1.3" width="1.200" height="1.200" fill="#dfe3f0"/><rect x="13.5" y="1.3" width="1.200" height="1.200" fill="#dfe3f0"/><rect x="1.5" y="4.0" width="1.200" height="1.200" fill="#dfe3f0"/><rect x="4.5" y="4.0" width="1.200" height="1.200" fill="#dfe3f0"/><rect x="7.5" y="4.0" width="1.200" height="1.200" fill="#dfe3f0"/><rect x="10.5" y="4.0" width="1.200" height="1.200" fill="#dfe3f0"/><rect x="13.5" y="4.0" width="1.200" height="1.200" fill="#dfe3f0"/><rect x="1.5" y="6.7" width="1.200" height="1.200" fill="#dfe3f0"/><rect x="4.5" y="6.7" width="1.200" height="1.200" fill="#dfe3f0"/><rect x="7.5" y="6.7" width="1.200" height="1.200" fill="#dfe3f0"/><rect x="10.5" y="6.7" width="1.200" height="1.200" fill="#dfe3f0"/><rect x="13.5" y="6.7" width="1.200" height="1.200" fill="#dfe3f0"/><rect x="1.5" y="9.4" width="1.200" height="1.200" fill="#dfe3f0"/><rect x="4.5" y="9.4" width="1.200" height="1.200" fill="#dfe3f0"/><rect x="7.5" y="9.4" width="1.200" height="1.200" fill="#dfe3f0"/><rect x="10.5" y="9.4" width="1.200" height="1.200" fill="#dfe3f0"/><rect x="13.5" y="9.4" width="1.200" height="1.200" fill="#dfe3f0"/></svg>
<svg style="position:absolute;left:2102px;top:105px" width="30" height="30" viewBox="0 0 30 30" ><path d="M4 12.200V4.200h8M18.500 4.200h8v8M26.500 17.800v8h-8M12 25.800H4v-8" fill="none" stroke="#475f7b" stroke-width="2.100"/></svg>
<svg style="position:absolute;left:2166px;top:102px" width="34" height="34" viewBox="0 0 34 34" ><circle cx="15.400" cy="15.300" r="9.600" fill="none" stroke="#475f7b" stroke-width="2.100"/><path d="M22.300 22.200l7.400 7" stroke="#475f7b" stroke-width="2.100"/></svg>
<svg style="position:absolute;left:2232px;top:104px" width="32" height="32" viewBox="0 0 32 32" ><g transform="rotate(-8 16 16)"><path d="M5 24.600c2-1.600 2.300-3.500 2.300-7.600 0-5.600 3.300-9.600 8.500-9.600s8.500 4 8.500 9.600c0 4.100.3 6 2.300 7.600z" fill="none" stroke="#475f7b" stroke-width="2.100" stroke-linejoin="round"/><path d="M12.600 25.500a3.300 3.300 0 0 0 6.400 0z" fill="#475f7b"/></g></svg>
<div class="a" style="left:2245.800px;top:92.800px;width:26.200px;height:26.200px;border-radius:50%;background:#FF5B5C"></div>
<svg style="position:absolute;left:2326px;top:96px" width="18" height="36" viewBox="0 0 18 36" ><path d="M2.500 2h12l-5.500 8z" fill="#fff" opacity=".9"/><path d="M8.500 24l5 7.500H4.500z" fill="#fff" opacity=".9"/><rect x="4" y="8" width="7" height="20" fill="#f6f7f9" opacity=".7"/></svg>
<span class="t " style="left:1992.4px;top:109px;font-size:22px;font-weight:400;color:#596f88;letter-spacing:1.23px">English</span>
<span class="t " style="left:2253.3px;top:98px;font-size:17px;font-weight:700;color:#fff;letter-spacing:0.00px">5</span>
</nav>
<footer class="g footer">
<svg style="position:absolute;left:2305.5px;top:1458px" width="17.4" height="16" viewBox="0 0 24 22" ><path d="M12 22C4 15 1 11 1 7a5.500 5.500 0 0 1 11-1 5.500 5.500 0 0 1 11 1c0 4-3 8-11 15z" fill="#FF5B5C"/></svg>
<span class="t " style="left:440.0px;top:1453px;font-size:22px;font-weight:400;color:#6b7c8f;letter-spacing:0.53px">2020 © PIXINVENT</span>
<span class="t " style="left:2166.1px;top:1453px;font-size:22px;font-weight:400;color:#6b7c8f;letter-spacing:0.72px">Crafted with</span>
<span class="t " style="left:2335.0px;top:1453px;font-size:22px;font-weight:400;color:#6b7c8f;letter-spacing:0.58px">by PIXINVENT</span>
</footer>
<div class="g watermarks">
<span class="wm" style="left:164px;top:66px">vip.9fym.com</span>
<span class="wm" style="left:23px;top:207px">vip.9fym.com</span>
<span class="wm" style="left:-148px;top:319px">vip.9fym.com</span>
<span class="wm" style="left:188px;top:653px">vip.9fym.com</span>
<span class="wm" style="left:47px;top:798px">vip.9fym.com</span>
<span class="wm" style="left:-125px;top:908px">vip.9fym.com</span>
<span class="wm" style="left:210px;top:1244px">vip.9fym.com</span>
<span class="wm" style="left:100px;top:1415px">vip.9fym.com</span>
<span class="wm" style="left:359px;top:542px">vip.9fym.com</span>
<span class="wm" style="left:382px;top:1131px">vip.9fym.com</span>
<span class="wm" style="left:1377px;top:148px">vip.9fym.com</span>
<span class="wm" style="left:1960px;top:163px">vip.9fym.com</span>
<span class="wm" style="left:2433px;top:364px">vip.9fym.com</span>
<span class="wm" style="left:855px;top:-47px">vip.9fym.com</span>
<span class="wm" style="left:1480px;top:-32px">vip.9fym.com</span>
<span class="wm" style="left:2142px;top:-82px">vip.9fym.com</span>
<span class="wm" style="left:1945px;top:1281px">vip.9fym.com</span>
<span class="wm" style="left:1865px;top:1484px">vip.9fym.com</span>
<span class="wm" style="left:2456px;top:1510px">vip.9fym.com</span>
<span class="wm" style="left:685px;top:1443px">vip.9fym.com</span>
<span class="wm" style="left:2230px;top:436px">vip.9fym.com</span>
<span class="wm" style="left:2093px;top:582px">vip.9fym.com</span>
<span class="wm" style="left:2140px;top:1158px">vip.9fym.com</span>
<span class="wm" style="left:985px;top:618px">vip.9fym.com</span>
<span class="wm" style="left:1060px;top:1128px">vip.9fym.com</span>
<span class="wm" style="left:1650px;top:598px">vip.9fym.com</span>
</div>
</body></html>
